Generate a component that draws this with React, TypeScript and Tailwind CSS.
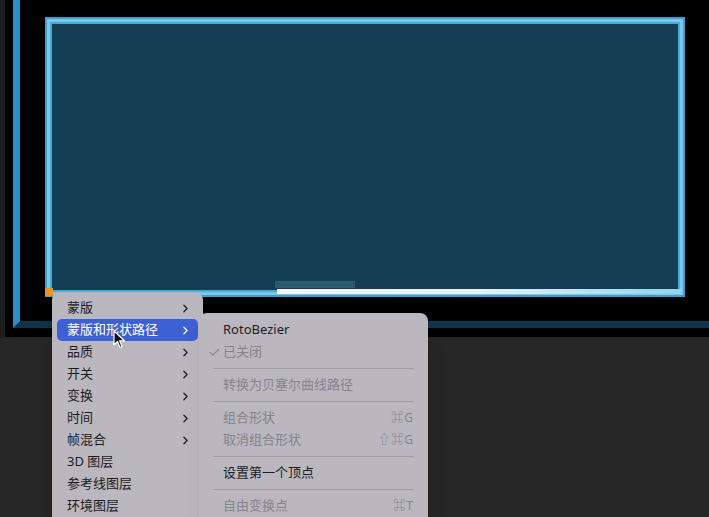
import { ChevronRight, Check } from "lucide-react";

type Item = { label: string; sub?: boolean; active?: boolean };

const layerItems: Item[] = [
  { label: "蒙版", sub: true },
  { label: "蒙版和形状路径", sub: true, active: true },
  { label: "品质", sub: true },
  { label: "开关", sub: true },
  { label: "变换", sub: true },
  { label: "时间", sub: true },
  { label: "帧混合", sub: true },
  { label: "3D 图层" },
  { label: "参考线图层" },
  { label: "环境图层" },
];

type SubRow =
  | { kind: "item"; label: string; disabled?: boolean; checked?: boolean; shortcut?: string }
  | { kind: "sep" };

const pathItems: SubRow[] = [
  { kind: "item", label: "RotoBezier" },
  { kind: "item", label: "已关闭", disabled: true, checked: true },
  { kind: "sep" },
  { kind: "item", label: "转换为贝塞尔曲线路径", disabled: true },
  { kind: "sep" },
  { kind: "item", label: "组合形状", disabled: true, shortcut: "⌘G" },
  { kind: "item", label: "取消组合形状", disabled: true, shortcut: "⇧⌘G" },
  { kind: "sep" },
  { kind: "item", label: "设置第一个顶点" },
  { kind: "sep" },
  { kind: "item", label: "自由变换点", disabled: true, shortcut: "⌘T" },
];

function Cursor() {
  return (
    <svg width="14" height="20" viewBox="0 0 14 20" className="absolute left-[113px] top-[330px]">
      <path d="M1 1 L1 15 L4.5 11.5 L7 17.5 L9 16.6 L6.6 10.8 L11.5 10.8 Z" fill="#111" stroke="#fff" strokeWidth="1.2" strokeLinejoin="round" />
    </svg>
  );
}

export default function App() {
  return (
    <div
      className="relative w-[709px] h-[517px] overflow-hidden bg-[#262626]"
      style={{ fontFamily: '"Noto Sans", "Noto Sans CJK SC", sans-serif' }}
    >
      {/* comp viewer */}
      <div className="flex h-[337px]">
        <div className="w-[5px] bg-[#1d1d1d]" />
        <div className="flex-1 bg-black pl-[8px]">
          <div className="h-[328px] border-l-[7px] border-b-[7px] border-l-[#2a8fc4] border-b-[#0f3447] pl-[25px] pt-[17px]">
            <div className="relative w-[640px] h-[280px] border-2 border-[#3b9fcf]">
              <div className="w-full h-full border-[3px] border-[#7cc7e7]">
                <div className="w-full h-full border-2 border-[#49aad6] bg-[#123d53]" />
              </div>
              {/* selection details on the layer bounds */}
              <div className="absolute left-[228px] bottom-[7px] w-[80px] h-[7px] bg-[#2b5a6e]" />
              <div className="absolute left-[230px] bottom-[1px] w-[405px] h-[5px] bg-gradient-to-r from-[#f4f4ee] via-[#e6f2f5] to-[#8fd3ee]" />
              <div className="absolute -left-[2px] -bottom-[1px] w-[8px] h-[8px] bg-[#e8951c]" />
            </div>
          </div>
        </div>
      </div>

      {/* layer context menu */}
      <div className="absolute left-[52px] top-[292px] w-[151px] h-[240px] rounded-lg bg-[#bab7bf] px-[5px] pt-[5px] shadow-lg text-[13px]">
        {layerItems.map((it) => (
          <div
            key={it.label}
            className={`flex items-center justify-between h-[22px] pl-[10px] pr-[6px] rounded-[5px] ${
              it.active ? "bg-[#3d61d4] text-white" : "text-[#1c1c1e]"
            }`}
          >
            <span>{it.label}</span>
            {it.sub && <ChevronRight size={13} strokeWidth={2.2} />}
          </div>
        ))}
      </div>

      {/* submenu */}
      <div className="absolute left-[199px] top-[313px] w-[229px] h-[220px] rounded-lg bg-[#bab7bf] px-[5px] pt-[6px] shadow-xl text-[13px]">
        {pathItems.map((row, i) =>
          row.kind === "sep" ? (
            <div key={i} className="h-[11px] flex items-center px-[9px]">
              <div className="w-full h-px bg-[#a09da6]" />
            </div>
          ) : (
            <div
              key={i}
              className={`relative flex items-center justify-between h-[22px] pl-[19px] pr-[9px] ${
                row.disabled ? "text-[#86838c]" : "text-[#1c1c1e]"
              }`}
            >
              {row.checked && <Check size={13} strokeWidth={2} className="absolute left-[4px] top-[5px]" />}
              <span>{row.label}</span>
              {row.shortcut && <span className="text-[12px] tracking-[1px]">{row.shortcut}</span>}
            </div>
          )
        )}
      </div>

      <Cursor />
    </div>
  );
}
